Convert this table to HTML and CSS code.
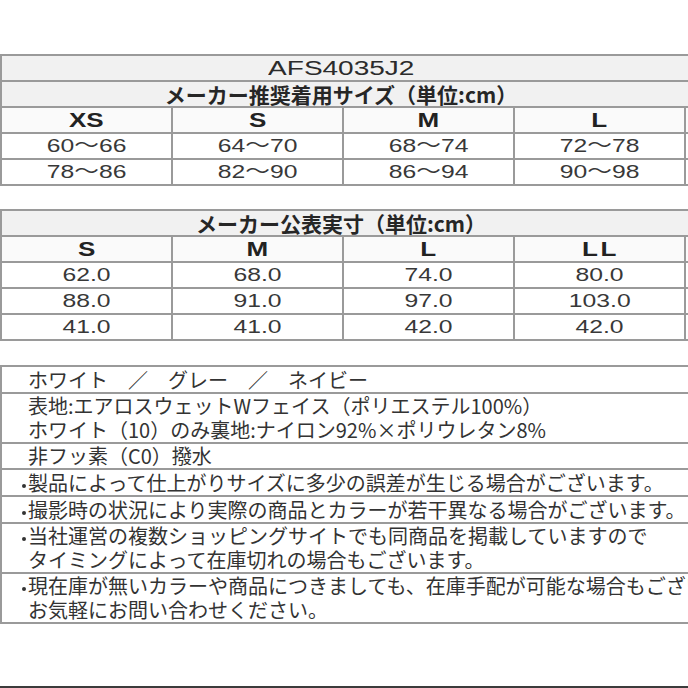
FILE: index.html
```html
<!DOCTYPE html>
<html lang="ja">
<head>
<meta charset="utf-8">
<title>AFS4035J2 サイズ表</title>
<link rel="stylesheet" href="styles.css">
</head>
<body>
<div class="page">
  <div class="tbl t1">
    <div class="title"><div class="title-text"><span class="lat lat-wide">AFS4035J2</span></div></div>
    <div class="title"><div class="title-text jp-bold">メーカー推奨着用サイズ（単位:cm）</div></div>
    <div class="grid">
      <div class="cell head"><span class="lat">XS</span></div>
      <div class="cell head"><span class="lat">S</span></div>
      <div class="cell head"><span class="lat">M</span></div>
      <div class="cell head"><span class="lat">L</span></div>
      <div class="cell head"><span class="lat spaced">LL</span></div>
      <div class="cell"><span class="lat">60～66</span></div>
      <div class="cell"><span class="lat">64～70</span></div>
      <div class="cell"><span class="lat">68～74</span></div>
      <div class="cell"><span class="lat">72～78</span></div>
      <div class="cell"><span class="lat">76～82</span></div>
      <div class="cell"><span class="lat">78～86</span></div>
      <div class="cell"><span class="lat">82～90</span></div>
      <div class="cell"><span class="lat">86～94</span></div>
      <div class="cell"><span class="lat">90～98</span></div>
      <div class="cell"><span class="lat">94～102</span></div>
    </div>
  </div>

  <div class="tbl t2">
    <div class="title"><div class="title-text jp-bold">メーカー公表実寸（単位:cm）</div></div>
    <div class="grid">
      <div class="cell head"><span class="lat">S</span></div>
      <div class="cell head"><span class="lat">M</span></div>
      <div class="cell head"><span class="lat">L</span></div>
      <div class="cell head"><span class="lat spaced">LL</span></div>
      <div class="cell head"><span class="lat">3L</span></div>
      <div class="cell"><span class="lat">62.0</span></div>
      <div class="cell"><span class="lat">68.0</span></div>
      <div class="cell"><span class="lat">74.0</span></div>
      <div class="cell"><span class="lat">80.0</span></div>
      <div class="cell"><span class="lat">86.0</span></div>
      <div class="cell"><span class="lat">88.0</span></div>
      <div class="cell"><span class="lat">91.0</span></div>
      <div class="cell"><span class="lat">97.0</span></div>
      <div class="cell"><span class="lat">103.0</span></div>
      <div class="cell"><span class="lat">109.0</span></div>
      <div class="cell"><span class="lat">41.0</span></div>
      <div class="cell"><span class="lat">41.0</span></div>
      <div class="cell"><span class="lat">42.0</span></div>
      <div class="cell"><span class="lat">42.0</span></div>
      <div class="cell"><span class="lat">43.0</span></div>
    </div>
  </div>

  <div class="tbl t3">
    <div class="row tall">ホワイト　／　グレー　／　ネイビー</div>
    <div class="row">表地:エアロスウェットWフェイス（ポリエステル100%）<br>ホワイト（10）のみ裏地:ナイロン92%×ポリウレタン8%</div>
    <div class="row">非フッ素（C0）撥水</div>
    <div class="row bul tall">製品によって仕上がりサイズに多少の誤差が生じる場合がございます。</div>
    <div class="row bul tall">撮影時の状況により実際の商品とカラーが若干異なる場合がございます。</div>
    <div class="row bul">当社運営の複数ショッピングサイトでも同商品を掲載していますので<br>タイミングによって在庫切れの場合もございます。</div>
    <div class="row bul">現在庫が無いカラーや商品につきましても、在庫手配が可能な場合もございますので<br>お気軽にお問い合わせください。</div>
  </div>

  <div class="bar"></div>
</div>
</body>
</html>
```

FILE: styles.css
```css
* {
  box-sizing: border-box;
}

html,
body {
  margin: 0;
  padding: 0;
  background: #ffffff;
}

body {
  width: 688px;
  height: 688px;
  overflow: hidden;
  font-family: "Noto Sans CJK JP", sans-serif;
  color: #2b2b2b;
}

.page {
  height: 688px;
  padding-top: 54px;
  display: flex;
  flex-direction: column;
  overflow: hidden;
}

.tbl {
  flex: none;
  width: 857px;
  border-top: 2px solid #9a9a9a;
  border-left: 2px solid #9a9a9a;
}

.t2 {
  margin-top: 23px;
}

.t3 {
  margin-top: 24px;
}

.title {
  height: 26px;
  border-bottom: 2px solid #9a9a9a;
  background: #f1f1f1;
}

.title-text {
  width: 678px;
  text-align: center;
  line-height: 24px;
  font-family: "Liberation Sans", "Noto Sans CJK JP", sans-serif;
  font-size: 20px;
  white-space: nowrap;
}

.jp-bold {
  font-family: "Noto Sans CJK JP", sans-serif;
  font-weight: 700;
  font-size: 21px;
  color: #262626;
}

.grid {
  display: grid;
  grid-template-columns: repeat(5, 171px);
}

.cell {
  height: 26px;
  border-right: 2px solid #9a9a9a;
  border-bottom: 2px solid #9a9a9a;
  line-height: 24px;
  text-align: center;
  font-family: "Liberation Sans", "Noto Sans CJK JP", sans-serif;
  font-size: 19px;
  white-space: nowrap;
  color: #383838;
}

.head {
  font-weight: 700;
  font-size: 20px;
  color: #222222;
  background: #fafafa;
}

.lat {
  display: inline-block;
  transform: scaleX(1.3);
}

.lat-wide {
  transform: scaleX(1.4);
}

.spaced {
  letter-spacing: 2px;
  padding-left: 2px;
}

.row {
  border-bottom: 2px solid #9a9a9a;
  padding-left: 26px;
  line-height: 24px;
  font-size: 20px;
  white-space: nowrap;
  color: #333333;
}

.tall {
  line-height: 25px;
}

.bul::before {
  content: "";
  display: inline-block;
  width: 4px;
  height: 4px;
  border-radius: 50%;
  background: #333333;
  margin-left: -6px;
  margin-right: 2px;
  vertical-align: middle;
}

.bar {
  flex: none;
  margin-top: auto;
  height: 2px;
  background: #3c3c3c;
}
```
